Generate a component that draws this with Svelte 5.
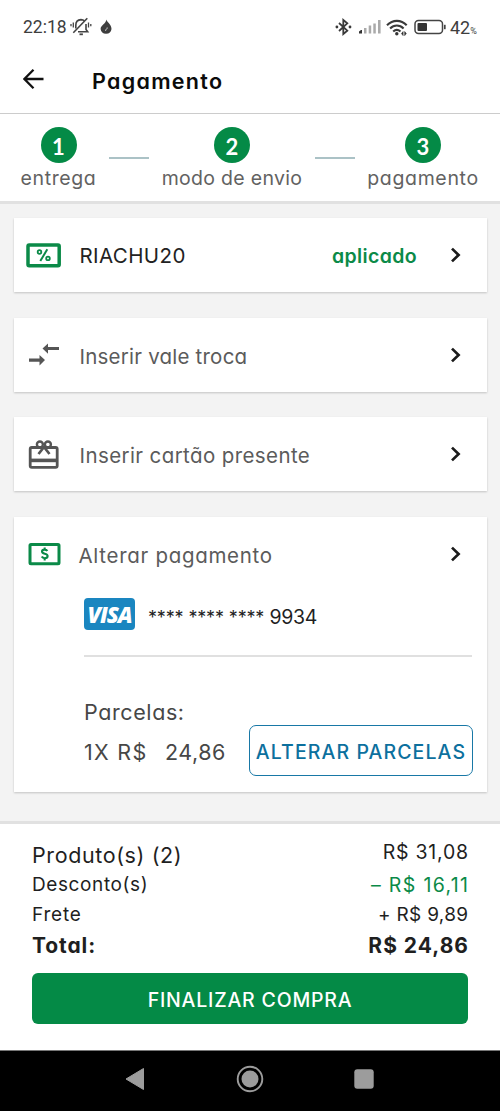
<script>
  const steps = [
    { n: 1, label: 'entrega', cls: 's1' },
    { n: 2, label: 'modo de envio', cls: 's2' },
    { n: 3, label: 'pagamento', cls: 's3' }
  ];
</script>

{#snippet chevron()}
  <svg class="chevron" width="12" height="18" viewBox="0 0 12 18"><path d="M2 2.600 8.600 9 2 15.400" fill="none" stroke="#1b1b1b" stroke-width="2.700" /></svg>
{/snippet}

<div class="screen">
  <header class="status">
    <span class="clock">22:18</span>
    <svg class="bell" width="22" height="20" viewBox="0 0 22 20" fill="none" stroke="#444" stroke-width="1.6">
      <path d="M5.800 11.500V8.200C5.800 5 8 2.800 11 2.600c1.500 0 2.600.5 3.500 1.300M16 7v5.500l1.700 2.300H8" />
      <path d="M17.300 1.200 3.300 15.800" />
      <path d="M9.500 17.300h3.400" stroke-width="1.800" />
      <path d="M3.300 5.500v5M1 7v2.200M18.500 5.500v5M20.800 7v2.200" stroke-width="1.300" />
    </svg>
    <svg class="flame" width="12" height="16" viewBox="0 0 12 16"><path d="M6.300.5c.2 2.300 5.200 4.800 5.200 9.400A5.500 5.500 0 0 1 .6 10C.6 7.800 2 6.900 3.200 5.500 4.800 4 6.200 2.800 6.300.5Z" fill="#3e3e3e" /><path d="M7.200 8.500c.2 1.700-1.800 1.700-1.600 3.300" fill="none" stroke="#fff" stroke-width=".8" /></svg>
    <span class="grow"></span>
    <svg class="bt" width="17" height="18" viewBox="0 0 17 18"><path d="m4 5 8.300 7.600-4 3.400V2l4 3.400L4 13" fill="none" stroke="#3a3a3a" stroke-width="1.800" /><circle cx="1.900" cy="9" r="1.400" fill="#3a3a3a" /><circle cx="15" cy="9" r="1.400" fill="#3a3a3a" /></svg>
    <svg class="signal" width="24" height="16" viewBox="0 0 24 16"><path d="M1 14.500v-2l2-1.500h1v3.500Z" fill="#333" /><path d="M6 14.500V9h2.500v5.500Zm4.700 0V6.500h2.500v8Zm4.600 0V4.500h2.500v10Zm4.700 0V1h2.600v13.500Z" fill="#aaa" /></svg>
    <svg class="wifi" width="22" height="17" viewBox="0 0 22 17"><g fill="none" stroke="#3a3a3a" stroke-width="2.100"><path d="M1 6.300C6.800.4 15 .4 20.700 6.300" /><path d="M4.100 9.500c4-4 9.500-4 13.500 0" /><path d="M7.200 12.600c2.200-2.200 5-2.200 7.300 0" /></g><circle cx="10.800" cy="14.800" r="1.700" fill="#333" /><path d="m15.500 14.600 1.600-2v4Zm4.800 0-1.600 2v-4Z" fill="#333" stroke="#333" stroke-width=".6" /></svg>
    <svg class="battery" width="33" height="16" viewBox="0 0 33 16"><rect x="1" y="1.600" width="27.500" height="12.800" rx="3.500" fill="none" stroke="#444" stroke-width="1.500" /><rect x="3.500" y="4" width="9.500" height="8" rx="1" fill="#333" /><path d="M30.800 5.800v4.400" stroke="#444" stroke-width="1.700" /></svg>
    <span class="level">42<small>%</small></span>
  </header>

  <div class="appbar">
    <svg width="22" height="20" viewBox="0 0 22 20"><path d="M20.500 10H1.500M10.500.8 1.400 10l9.100 9.200" fill="none" stroke="#111" stroke-width="2.300" /></svg>
    <h1>Pagamento</h1>
  </div>

  <nav class="steps">
    {#each steps as step, i}
      {#if i > 0}<i class="link"></i>{/if}
      <div class="step {step.cls}">
        <b>{step.n}</b>
        <span>{step.label}</span>
      </div>
    {/each}
  </nav>

  <main>
    <section class="card row">
      <span class="icon">
        <svg width="35" height="25" viewBox="0 0 35 25"><rect x="2" y="2" width="31.200" height="20.800" rx="1.200" fill="none" stroke="#0b8a48" stroke-width="3.500" /><g fill="none" stroke="#0b8a48" stroke-width="1.800"><circle cx="13.500" cy="9" r="1.800" /><circle cx="22" cy="15.400" r="1.800" /><path d="m21.300 6.300-7 11.800" stroke-width="2" /></g></svg>
      </span>
      <span class="label coupon">RIACHU20</span>
      <span class="applied">aplicado</span>
      {@render chevron()}
    </section>

    <section class="card row">
      <span class="icon">
        <svg width="35" height="24" viewBox="0 0 35 24"><path d="M3 14.600h10.500v-3.700l5.500 5.200-5.500 5.300v-3.700H3Zm30-8.500H22v3.600l-5.500-5.200L22-.6v3.600h11Z" transform="translate(0 1)" fill="#555" /></svg>
      </span>
      <span class="label voucher">Inserir vale troca</span>
      {@render chevron()}
    </section>

    <section class="card row">
      <span class="icon">
        <svg width="35" height="30" viewBox="0 0 35 30" fill="none" stroke="#555" stroke-width="2.800"><rect x="4.200" y="8.500" width="27" height="19.800" rx="1.600" /><path d="M4 21.400h27.500" stroke-width="3.600" /><circle cx="13.900" cy="5.500" r="3" stroke-width="2.400" /><circle cx="21.900" cy="5.500" r="3" stroke-width="2.400" /><path d="m18 8-5.500 7M18 8l5.500 7" stroke-width="2.700" /></svg>
      </span>
      <span class="label gift">Inserir cartão presente</span>
      {@render chevron()}
    </section>

    <section class="card pay">
      <div class="row">
        <span class="icon">
          <svg width="35" height="24" viewBox="0 0 35 24"><rect x="4" y="2.500" width="29" height="19.200" rx="1" fill="none" stroke="#0b8a48" stroke-width="3" /><path d="M21.300 9c-.5-1-1.500-1.400-2.700-1.400-1.600 0-2.600.8-2.600 2 0 3 5.600 1.300 5.600 4.400 0 1.400-1.200 2.200-2.800 2.200-1.500 0-2.500-.5-3.100-1.600M18.700 5.500v2.100M18.700 16.200v2.300" fill="none" stroke="#0b8a48" stroke-width="2.100" /></svg>
        </span>
        <span class="label change">Alterar pagamento</span>
        {@render chevron()}
      </div>
      <div class="account">
        <span class="visa"><i>VISA</i></span>
        <span class="stars">**** **** ****</span>
        <span class="digits">9934</span>
      </div>
      <div class="parcels">
        <div class="plan">
          <span class="ptitle">Parcelas:</span>
          <div class="amount"><span class="times">1X R$</span><span class="value">24,86</span></div>
        </div>
        <button class="alter">ALTERAR PARCELAS</button>
      </div>
    </section>
  </main>

  <footer>
    <dl>
      <div class="line first"><dt>Produto(s) (2)</dt><dd>R$ 31,08</dd></div>
      <div class="line discount"><dt>Desconto(s)</dt><dd>– R$ 16,11</dd></div>
      <div class="line freight"><dt>Frete</dt><dd>+ R$ 9,89</dd></div>
      <div class="line total"><dt>Total:</dt><dd>R$ 24,86</dd></div>
    </dl>
    <button class="finish">FINALIZAR COMPRA</button>
  </footer>

  <div class="system">
    <svg width="20" height="24" viewBox="0 0 20 24"><path d="M18.500 1.500v21L1 12Z" fill="#9c9c9c" stroke="#9c9c9c" stroke-linejoin="round" /></svg>
    <svg width="28" height="28" viewBox="0 0 28 28"><circle cx="14" cy="14" r="12.300" fill="none" stroke="#9c9c9c" stroke-width="1.900" /><circle cx="14" cy="14" r="8.500" fill="#9c9c9c" /></svg>
    <svg width="20" height="20" viewBox="0 0 20 20"><rect x=".3" y=".3" width="19.400" height="19.400" rx="3" fill="#9c9c9c" /></svg>
  </div>
</div>

<style>
  :global(body) { margin: 0; background: #fff; }
  .screen {
    width: 500px;
    height: 1111px;
    display: flex;
    flex-direction: column;
    overflow: hidden;
    background: #fff;
    color: #1f1f1f;
    font-family: Inter, "Liberation Sans", sans-serif;
    font-feature-settings: "cv11";
    white-space: nowrap;
  }
  svg { display: block; flex: none; }
  button { padding: 0; font-family: inherit; font-feature-settings: inherit; box-sizing: border-box; }

  .status { height: 53px; box-sizing: border-box; padding: 1px 23px 0 23px; display: flex; align-items: center; font-family: Roboto, sans-serif; color: #3e3e3e; }
  .clock { width: 47px; font-size: 17.500px; letter-spacing: 0; }
  .flame { margin-left: 8px; }
  .grow { flex: 1; }
  .bt { margin-right: 1px; }
  .signal { margin-left: 5px; }
  .wifi { margin-left: 4px; }
  .battery { margin-left: 6px; }
  .level { margin-left: 3px; width: 27px; font-size: 18px; }
  small { font-size: 9px; }

  .appbar { height: 61px; box-sizing: border-box; padding: 0 23px 9px 22.500px; display: flex; align-items: center; border-bottom: 1px solid #ccc; }
  h1 { margin: 4px 0 0 47.500px; font-size: 21.500px; line-height: 26px; font-weight: 600; color: #0b0b0b; letter-spacing: 1.300px; }

  .steps { height: 90px; box-sizing: border-box; padding: 13px 20px 0 20px; display: flex; align-items: flex-start; border-bottom: 3px solid #e1e1e1; }
  .step { display: flex; flex-direction: column; align-items: center; }
  .s1 { width: 77px; letter-spacing: .6px; }
  .s2 { width: 142px; letter-spacing: .3px; }
  .s3 { width: 112px; letter-spacing: .65px; }
  .step b { width: 36px; height: 36px; border-radius: 50%; background: #048a46; color: #fff; font: 700 22px/39px Lato, sans-serif; letter-spacing: 0; text-align: center; }
  .step span { margin-top: 1.500px; font-size: 19.500px; line-height: 26px; color: #626262; }
  .link { flex: none; width: 40px; height: 2px; margin: 30px 12px 0; background: #abc2c6; }

  main { height: 617px; box-sizing: border-box; padding: 14px 13.500px 0; background: #f3f3f3; display: flex; flex-direction: column; gap: 25.500px; }
  .card { background: #fff; box-shadow: 0 1px 2px rgba(0, 0, 0, .2); }
  .row { height: 74px; display: flex; align-items: center; }
  .icon { width: 66px; box-sizing: border-box; padding-left: 12px; flex: none; }
  .label { flex: 1; font-size: 20.500px; line-height: 26px; color: #5b5b5b; padding-top: 4px; }
  .coupon { color: #222; letter-spacing: .4px; padding-top: 2px; }
  .voucher { letter-spacing: .22px; }
  .gift { letter-spacing: .4px; }
  .change { letter-spacing: .7px; margin-left: -1px; }
  .applied { font-size: 19.500px; font-weight: 600; color: #0b8a48; letter-spacing: .35px; margin-right: 33px; line-height: 26px; padding-top: 1px; }
  .chevron { margin-right: 24.500px; }
  .pay { height: 275px; }
  .account { margin: 0 14.500px 0 70.500px; height: 64px; display: flex; align-items: flex-start; border-bottom: 2px solid #e0e0e0; }
  .visa { margin-top: 7px; width: 51px; height: 32px; border-radius: 4px; background: #1a86c0; color: #fff; font: 800 22px/33px "Open Sans", sans-serif; letter-spacing: -1.100px; text-align: center; }
  .stars { margin: 15px 0 0 13px; width: 121.500px; font-size: 18px; line-height: 24px; letter-spacing: -.15px; }
  .digits { margin-top: 14px; font-size: 19.500px; line-height: 24px; letter-spacing: -.3px; }
  .parcels { display: flex; justify-content: space-between; margin: 0 13.500px 0 70.500px; }
  .plan { display: flex; flex-direction: column; padding-top: 41px; color: #474747; font-size: 21.500px; line-height: 28px; letter-spacing: .6px; }
  .amount { display: flex; margin-top: 12.500px; }
  .times { width: 81px; letter-spacing: 1.300px; }
  .value { letter-spacing: .5px; }
  .alter { margin-top: 68.500px; width: 224px; height: 51px; padding-top: 2px; border: 1.500px solid #1878a6; border-radius: 7px; background: #fff; color: #0c709e; font-size: 19.500px; font-weight: 500; letter-spacing: 1.100px; }

  footer { height: 229px; box-sizing: border-box; border-top: 3px solid #e1e1e1; padding: 0 32px; }
  dl { margin: 0; padding-top: 14px; }
  .line { display: flex; justify-content: space-between; align-items: center; height: 30px; font-size: 19px; }
  dt, dd { margin: 0; }
  .first { height: 31px; }
  .first dt { font-size: 21.500px; letter-spacing: .6px; padding-top: 2px; }
  .first dd { font-size: 19.500px; letter-spacing: .75px; margin: 0 -.75px 3px 0; }
  .discount dt { letter-spacing: .6px; padding-top: 1px; }
  .discount dd { font-size: 19.500px; color: #0b8a48; letter-spacing: 1.350px; margin-right: -1.350px; padding-top: 1px; }
  .freight dt { letter-spacing: .8px; }
  .freight dd { letter-spacing: .3px; margin-right: -.3px; }
  .total { height: 32px; font-size: 21px; font-weight: 700; }
  .total dt { letter-spacing: .9px; }
  .total dd { letter-spacing: 1px; margin-right: -1px; }
  .finish { display: block; margin-top: 12px; width: 436px; height: 51px; padding-top: 2px; border: 0; border-radius: 6px; background: #048a46; color: #fff; font-size: 19.500px; font-weight: 500; letter-spacing: .8px; }

  .system { flex: 1; background: #000; border-top: 1px solid #777; display: flex; align-items: center; padding: 0 126px 4px 125px; justify-content: space-between; }
</style>
